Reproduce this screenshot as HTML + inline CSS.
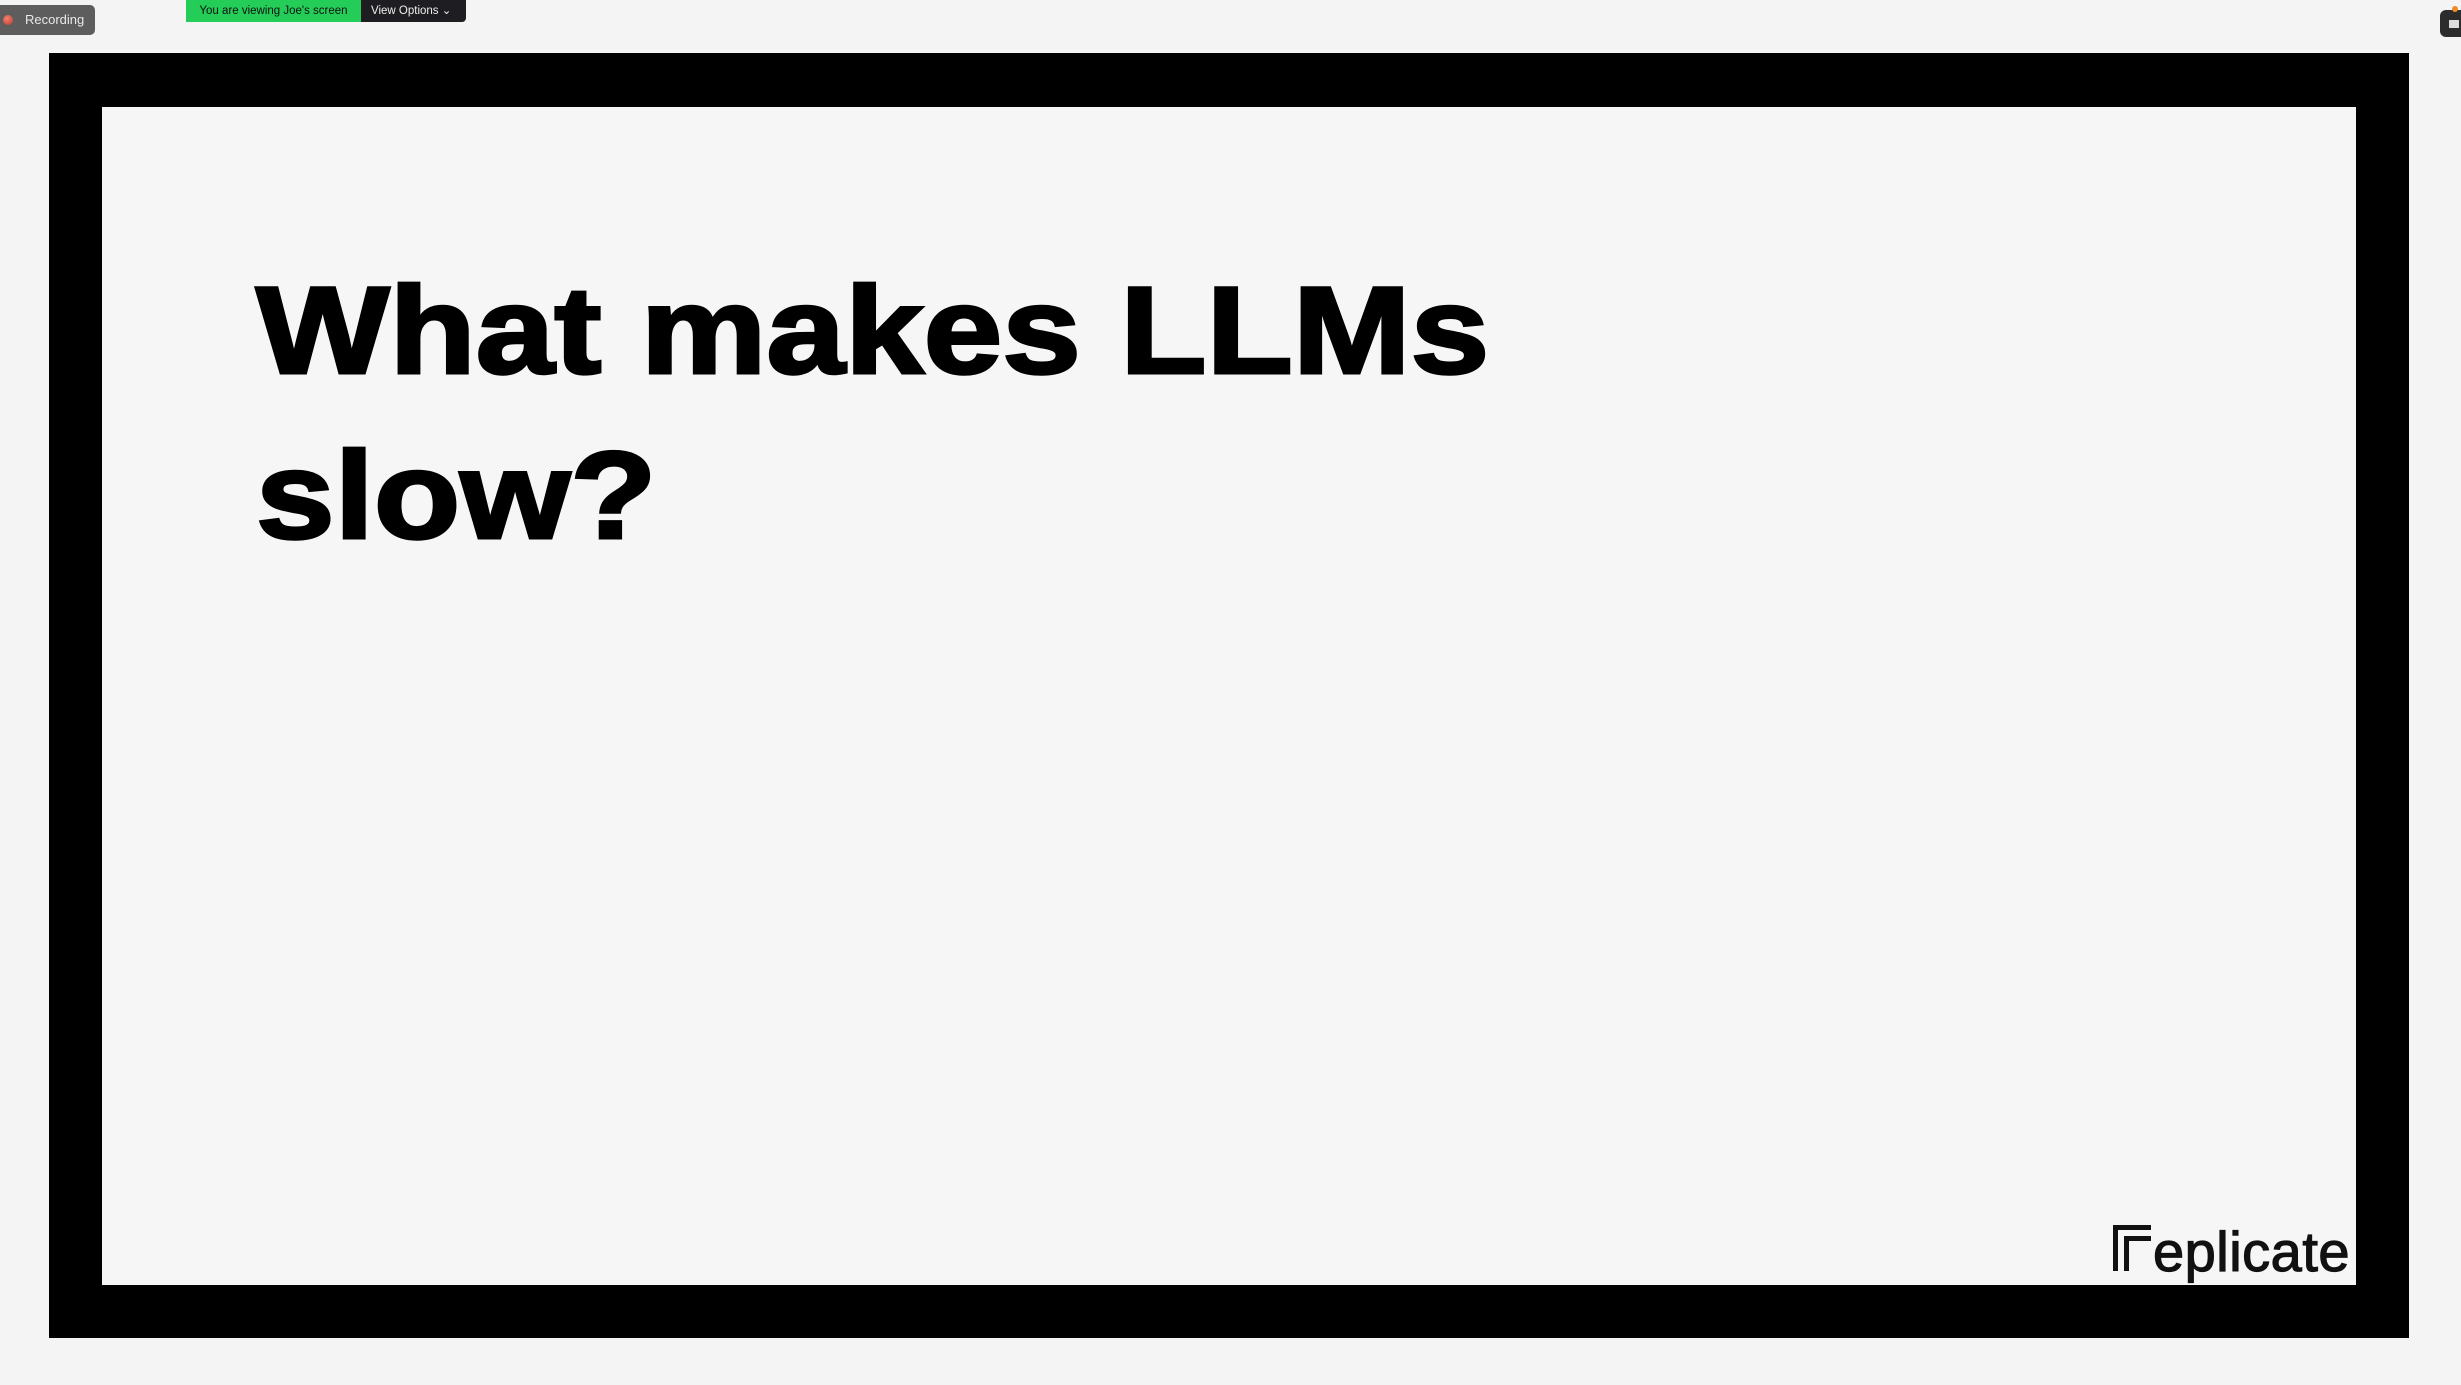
<!DOCTYPE html>
<html><head><meta charset="utf-8"><style>
html,body{margin:0;padding:0;}
body{width:2461px;height:1385px;background:#f4f4f4;position:relative;overflow:hidden;font-family:"Liberation Sans",sans-serif;}
.frame{position:absolute;left:49px;top:53px;width:2360px;height:1285px;background:#000;}
.slide{position:absolute;left:102px;top:107px;width:2254px;height:1178px;background:#f6f6f6;}
.title{position:absolute;left:256px;top:249px;font-weight:bold;font-size:124px;line-height:165px;letter-spacing:0;color:#000;-webkit-text-stroke:3px #000;margin:0;transform:scaleX(1.14);transform-origin:0 0;white-space:nowrap;}
.rec{position:absolute;left:0;top:5px;width:95px;height:30px;background:#5d5d5d;border-radius:0 5px 5px 0;color:#e8e8e8;font-size:13px;line-height:30px;}
.rec .dot{position:absolute;left:3px;top:10px;width:10px;height:10px;border-radius:50%;background:radial-gradient(circle at 40% 35%,#f08070,#c0392b);}
.rec span{position:absolute;left:25px;}
.green{position:absolute;left:186px;top:0;width:175px;height:22px;background:#23cd57;color:#111;font-size:11.5px;line-height:22px;text-align:center;}
.vo{position:absolute;left:361px;top:0;width:105px;height:22px;background:#1e1e22;color:#eee;font-size:11.5px;line-height:22px;border-radius:0 0 4px 0;padding-left:10px;box-sizing:border-box;}
.ri{position:absolute;left:2440px;top:10px;width:24px;height:27px;background:#2c2c2c;border-radius:6px 0 0 6px;}
.ri:before{content:"";position:absolute;left:12px;top:-4px;width:6px;height:6px;border-radius:50%;background:#f08a24;}
.ri:after{content:"";position:absolute;left:9px;top:10px;width:10px;height:8px;background:#ddd;}
.logo{position:absolute;left:2113px;top:1225px;}
.logo .txt{position:absolute;left:40px;top:-6px;font-size:56px;color:#111;letter-spacing:0.5px;white-space:nowrap;-webkit-text-stroke:1.2px #111;}
</style></head><body>
<div class="frame"></div>
<div class="slide"></div>
<div class="title">What makes LLMs<br>slow?</div>
<div class="logo">
<svg width="42" height="46" viewBox="0 0 42 46" style="position:absolute;left:0;top:0"><path d="M0 0h38v5H5v41H0z M11 11h27v5H16v30h-5z" fill="#111"/></svg>
<div class="txt">eplicate</div>
</div>
<div class="rec"><div class="dot"></div><span>Recording</span></div>
<div class="green">You are viewing Joe's screen</div>
<div class="vo">View Options ⌄</div>
<div class="ri"></div>
</body></html>
